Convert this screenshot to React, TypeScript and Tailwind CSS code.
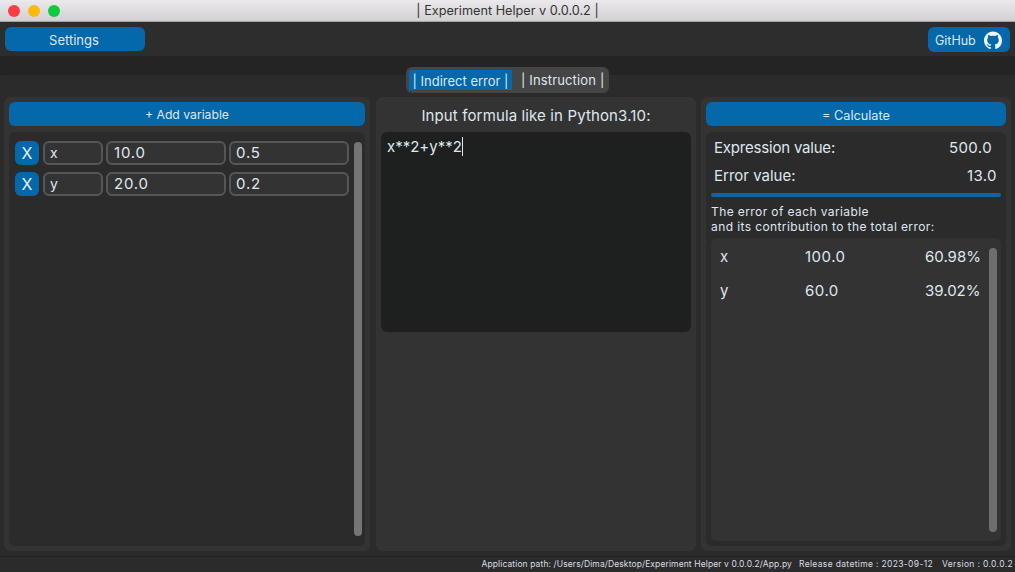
import React from 'react';

const font = { fontFamily: 'Inter, sans-serif' };

function GithubMark() {
  return (
    <svg viewBox="0 0 24 24" className="w-[18px] h-[18px]" fill="#f0f4f8">
      <path d="M12 .5C5.37.5 0 5.87 0 12.5c0 5.3 3.44 9.8 8.2 11.39.6.11.82-.26.82-.58v-2.03c-3.34.73-4.04-1.61-4.04-1.61-.55-1.39-1.34-1.76-1.34-1.76-1.09-.75.08-.73.08-.73 1.2.08 1.84 1.24 1.84 1.24 1.07 1.83 2.81 1.3 3.5 1 .11-.78.42-1.3.76-1.6-2.67-.3-5.47-1.33-5.47-5.93 0-1.31.47-2.38 1.24-3.22-.13-.3-.54-1.52.11-3.18 0 0 1.01-.32 3.3 1.23a11.5 11.5 0 0 1 6.02 0c2.28-1.55 3.29-1.23 3.29-1.23.65 1.66.24 2.88.12 3.18.77.84 1.23 1.91 1.23 3.22 0 4.61-2.81 5.63-5.48 5.92.43.37.81 1.1.81 2.22v3.29c0 .32.22.7.83.58A12 12 0 0 0 24 12.5C24 5.87 18.63.5 12 .5z" />
    </svg>
  );
}

function VarRow({ name, value, error }: { name: string; value: string; error: string }) {
  return (
    <div className="flex gap-[3px] h-6">
      <button className="w-6 h-6 mr-px rounded-md bg-[#0468ab] text-[#e8f0f8] text-base leading-6 text-center">X</button>
      <div className="w-[60px] rounded-md border-2 border-[#545658] bg-[#333333] text-[#dfe7ef] text-[14px] leading-5 pl-[5px]">{name}</div>
      <div className="w-[120px] rounded-md border-2 border-[#545658] bg-[#333333] text-[#dfe7ef] text-[15px] tracking-[0.8px] leading-5 pl-[6px]">{value}</div>
      <div className="w-[120px] rounded-md border-2 border-[#545658] bg-[#333333] text-[#dfe7ef] text-[15px] tracking-[0.8px] leading-5 pl-[5px]">{error}</div>
    </div>
  );
}

function ResultRow({ name, value, share, className }: { name: string; value: string; share: string; className: string }) {
  return (
    <div className={`flex items-center h-5 text-[15px] text-[#dfe7ef] ${className}`}>
      <span className="w-[85px]">{name}</span>
      <span className="w-[120px] tracking-[0.5px]">{value}</span>
      <span>{share}</span>
    </div>
  );
}

export default function App() {
  return (
    <div className="w-[1015px] h-[572px] flex flex-col overflow-hidden bg-[#2b2b2b]" style={font}>
      {/* window title bar */}
      <div className="relative h-[22px] shrink-0 flex items-center justify-center bg-gradient-to-b from-[#ebe9eb] to-[#d2d0d2] border-b border-[#a3a3a3] text-[12.7px] text-[#333333]">
        <div className="absolute left-2 top-[5px] flex gap-2">
          <span className="w-3 h-3 rounded-full bg-[#fc3c44]" />
          <span className="w-3 h-3 rounded-full bg-[#fdb90a]" />
          <span className="w-3 h-3 rounded-full bg-[#0ccb3f]" />
        </div>
        | Experiment Helper v 0.0.0.2 |
      </div>

      {/* top bar */}
      <div className="h-[34px] shrink-0 flex items-start justify-between pt-[5px] pl-[5px] pr-[5px] bg-[#2d2d2d]">
        <button className="w-[140px] h-6 pt-[3px] pr-[2px] rounded-md bg-[#0468ab] text-[#dfe7ef] text-[13px]">Settings</button>
        <button className="w-[82px] h-[25px] rounded-md bg-[#0468ab] text-[#dfe7ef] text-[12.5px] flex items-center justify-between pl-[7px] pr-[8px]">
          <span className="pt-[3px]">GitHub</span>
          <GithubMark />
        </button>
      </div>
      <div className="h-[19px] shrink-0 bg-[#242424]" />

      {/* main area */}
      <div className="flex-1 min-h-0 flex flex-col bg-[#2b2b2b] rounded-t-md px-1">
        <div className="h-[26px] shrink-0 -mt-2 flex justify-center">
          <div className="w-[203px] h-[26px] rounded-md bg-[#454545] flex items-center pl-[3px] text-[13px] text-[#dfe7ef]">
            <span className="w-[103px] h-5 pt-[2px] bg-[#0468ab] flex items-center justify-center leading-none">| Indirect error |</span>
            <span className="ml-[9px] pt-[2px] tracking-[0.15px]">| Instruction |</span>
          </div>
        </div>

        <div className="flex mt-1 h-[454px]">
          {/* variables */}
          <div className="w-[366px] mr-[6px] flex flex-col gap-[6px] p-[5px] rounded-md bg-[#333333]">
            <button className="h-6 shrink-0 pt-[3px] rounded-md bg-[#0468ab] text-[#dfe7ef] text-[12.2px]">+ Add variable</button>
            <div className="flex-1 flex gap-[5px] rounded-md bg-[#2b2b2b] pl-[6px] pr-[3px] pt-[9px] pb-[10px]">
              <div className="flex flex-col gap-[7px]">
                <VarRow name="x" value="10.0" error="0.5" />
                <VarRow name="y" value="20.0" error="0.2" />
              </div>
              <div className="w-2 mt-px rounded-full bg-[#757575]" />
            </div>
          </div>

          {/* formula */}
          <div className="w-[320px] mr-[5px] flex flex-col p-[5px] rounded-md bg-[#333333]">
            <div className="h-[30px] shrink-0 flex items-center justify-center pb-[1px] text-[15px] tracking-[0.13px] text-[#dfe7ef]">Input formula like in Python3.10:</div>
            <div className="h-[200px] rounded-md bg-[#1e2020] px-[6px] pt-[5px] text-[15px] leading-5 text-[#dfe7ef]">
              <span className="border-r border-[#dfe7ef]">x**2+y**2</span>
            </div>
          </div>

          {/* results */}
          <div className="w-[310px] flex flex-col gap-[6px] p-[5px] rounded-md bg-[#333333]">
            <button className="h-6 shrink-0 pt-[3px] rounded-md bg-[#0468ab] text-[#dfe7ef] text-[12.7px]">= Calculate</button>
            <div className="flex-1 min-h-0 flex flex-col rounded-md bg-[#2b2b2b] px-[5px] pb-[5px]">
              <div className="h-[28px] mt-[2px] flex items-center justify-between pl-[3px] pr-[9px] text-[15px] text-[#dfe7ef]">
                <span className="tracking-[-0.2px]">Expression value:</span>
                <span className="tracking-[0.4px]">500.0</span>
              </div>
              <div className="h-[28px] flex items-center justify-between pl-[3px] pr-[4px] text-[15px] text-[#dfe7ef]">
                <span>Error value:</span>
                <span className="tracking-[0.4px]">13.0</span>
              </div>
              <div className="h-1 mt-[3px] shrink-0 rounded-full bg-[#0468ab]" />
              <div className="mt-[7px] text-[12px] tracking-[0.4px] leading-[15px] text-[#dfe7ef] whitespace-nowrap">
                The error of each variable<br />
                and its contribution to the total error:
              </div>
              <div className="relative flex-1 min-h-0 mt-[4px] rounded-md bg-[#333333] pl-[9px] pt-[9px]">
                <ResultRow name="x" value="100.0" share="60.98%" className="" />
                <ResultRow name="y" value="60.0" share="39.02%" className="mt-[14px]" />
                <div className="absolute right-[4px] top-[10px] bottom-[9px] w-2 rounded-full bg-[#6e6e6e]" />
              </div>
            </div>
          </div>
        </div>
      </div>

      {/* status line */}
      <div className="h-[16px] shrink-0 flex items-center justify-end pr-[2px] border-t border-[#232323] text-[8.5px] text-[#d6dee6] whitespace-nowrap">
        <span className="tracking-[0.11px]">Application path: /Users/Dima/Desktop/Experiment Helper v 0.0.0.2/App.py</span>
        <span className="ml-[7px] tracking-[0.34px]">Release datetime : 2023-09-12</span>
        <span className="ml-[9px] tracking-[0.35px]">Version : 0.0.0.2</span>
      </div>
    </div>
  );
}
